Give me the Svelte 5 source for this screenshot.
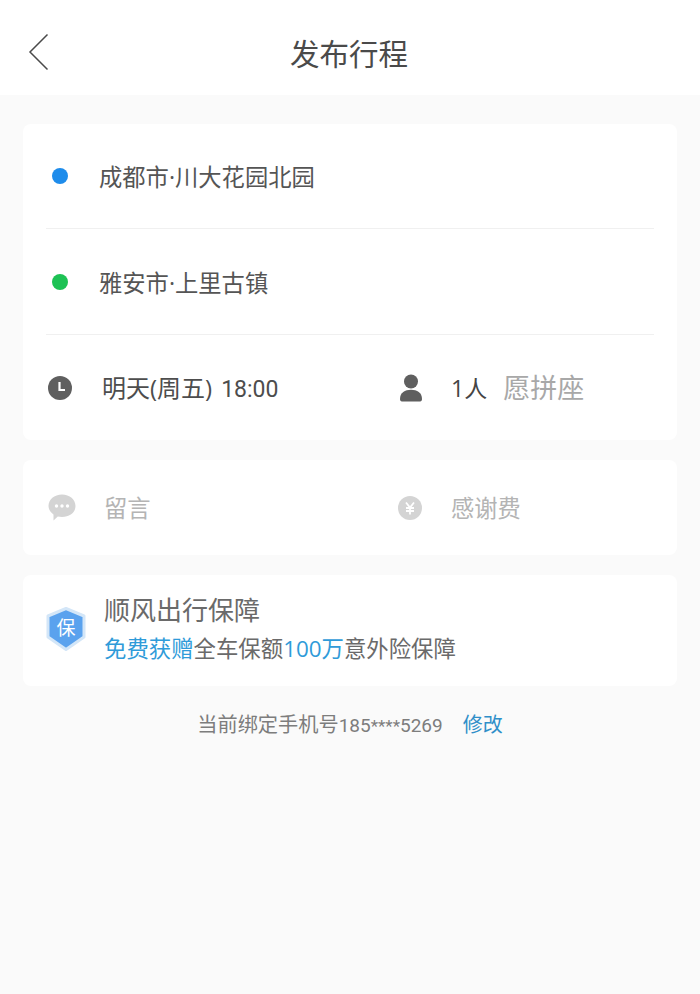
<script lang="ts">
  const hidden = '****';
</script>

<div class="page">
  <header class="topbar">
    <button class="back" aria-label="返回">
      <svg width="22" height="38" viewBox="0 0 22 38">
        <path d="M19.5 1.5 L2 19 L19.5 36.5" fill="none" stroke="#4a4a4a" stroke-width="1.5" />
      </svg>
    </button>
    <h1>发布行程</h1>
  </header>

  <main class="content">
    <section class="card route">
      <div class="place">
        <span class="dot blue"></span>
        <span class="place-name">成都市·川大花园北园</span>
      </div>
      <div class="place second">
        <span class="dot green"></span>
        <span class="place-name">雅安市·上里古镇</span>
      </div>
      <div class="split trip">
        <div class="cell time">
          <svg class="ico" width="24" height="24" viewBox="0 0 24 24">
            <circle cx="12" cy="12" r="12" fill="#5f5f5f" />
            <path d="M11.5 6 V14 H17" fill="none" stroke="#fff" stroke-width="2.2" />
          </svg>
          <span class="time-text">明天(周五)<span class="clock">18:00</span></span>
        </div>
        <div class="cell seats">
          <svg class="ico" width="24" height="28" viewBox="0 0 24 28">
            <circle cx="12" cy="7.5" r="7" fill="#5f5f5f" />
            <path d="M1 25 C1 18.5 6 15.8 12 15.8 C18 15.8 23 18.5 23 25 C23 27 22 27.5 20 27.5 H4 C2 27.5 1 27 1 25 Z" fill="#5f5f5f" />
          </svg>
          <span class="count">1人</span>
          <span class="carpool">愿拼座</span>
        </div>
      </div>
    </section>

    <section class="card split extras">
      <div class="cell note">
        <svg class="ico" width="28" height="27" viewBox="0 0 28 27">
          <path d="M14 0.5 C21.7 0.5 27.5 5.6 27.5 12 C27.5 18.4 21.7 23 14 23 C12.5 23 11 22.8 9.8 22.5 L5.5 26.5 L5.5 20.4 C2.4 18.2 0.5 15.3 0.5 12 C0.5 5.6 6.3 0.5 14 0.5 Z" fill="#d4d4d4" />
          <circle cx="8.5" cy="12" r="1.7" fill="#fff" />
          <circle cx="14" cy="12" r="1.7" fill="#fff" />
          <circle cx="19.5" cy="12" r="1.7" fill="#fff" />
        </svg>
        <span class="muted">留言</span>
      </div>
      <div class="cell fee">
        <svg class="ico" width="24" height="24" viewBox="0 0 24 24">
          <circle cx="12" cy="12" r="12" fill="#d4d4d4" />
          <path d="M8 6.5 L12 11.5 L16 6.5 M8 12 H16 M8 15 H16 M12 11.5 V18.5" fill="none" stroke="#fff" stroke-width="1.8" />
        </svg>
        <span class="muted">感谢费</span>
      </div>
    </section>

    <section class="card insurance">
      <svg class="shield" width="40" height="44" viewBox="0 0 40 44">
        <path d="M20 1.5 L38 9 V30 L20 42.5 L2 30 V9 Z" fill="#5aa2ee" stroke="#d3e6f8" stroke-width="3" stroke-linejoin="round" />
        <text x="20" y="28" text-anchor="middle">保</text>
      </svg>
      <div class="insurance-text">
        <div class="insurance-title">顺风出行保障</div>
        <div class="insurance-desc"><em>免费获赠</em>全车保额<em>100万</em>意外险保障</div>
      </div>
    </section>

    <p class="phone">当前绑定手机号<span class="num">185<span class="stars">{hidden}</span>5269</span><a href="#edit">修改</a></p>
  </main>
</div>

<style>
  :global(body) {
    margin: 0;
    background: #fafafa;
  }

  .page {
    height: 994px;
    overflow: hidden;
    background: #fafafa;
    color: #444;
    font-family: "Open Sans", "Noto Sans CJK SC", sans-serif;
  }

  .topbar {
    height: 95px;
    box-sizing: border-box;
    padding-top: 9px;
    background: #fff;
    display: flex;
    align-items: center;
    justify-content: center;
    position: relative;
  }
  .back {
    position: absolute;
    left: 28px;
    top: 33px;
    padding: 0;
    border: none;
    background: none;
    line-height: 0;
  }
  h1 {
    margin: 0 2px 0 0;
    font-size: 29.5px;
    font-weight: 400;
    color: #4a4a4a;
  }

  .content {
    padding: 29px 23px 0;
    display: flex;
    flex-direction: column;
    gap: 20px;
  }

  .card {
    background: #fff;
    border-radius: 8px;
  }

  .place {
    height: 105px;
    margin: 0 23px;
    display: flex;
    align-items: center;
    border-bottom: 1px solid #f0f0f0;
    box-sizing: border-box;
  }
  .place.second { height: 106px; }
  .dot {
    width: 16px;
    height: 16px;
    border-radius: 50%;
    margin: 0 31px 0 6px;
  }
  .dot.blue { background: #1e8ceb; }
  .dot.green { background: #1dc254; }
  .place-name {
    font-size: 23.3px;
    color: #555;
  }

  .split {
    display: flex;
    align-items: center;
  }
  .trip { height: 105px; }
  .extras { height: 95px; }

  .cell {
    display: flex;
    align-items: center;
    flex: none;
  }
  .time, .note { width: 375px; padding-left: 25px; box-sizing: border-box; }
  .ico { flex: none; }
  .seats { padding-left: 1px; }

  .time-text {
    margin: 0 0 2px 30px;
    font-size: 24px;
    color: #4d4d4d;
  }
  .clock {
    margin-left: 9px;
    font-family: Roboto, sans-serif;
    font-size: 23px;
  }
  .count {
    margin: 0 0 2px 28px;
    font-size: 23px;
    color: #444;
  }
  .carpool {
    margin: 0 0 2px 16px;
    font-size: 27px;
    color: #a8a8a8;
  }
  .muted {
    margin-bottom: 2px;
    font-size: 23.3px;
    color: #b4b4b4;
  }
  .note .muted { margin-left: 28px; }
  .fee .muted { margin-left: 29px; }

  .insurance {
    height: 111px;
    display: flex;
    align-items: center;
    padding-left: 23px;
  }
  .shield { flex: none; margin-bottom: 4px; }
  .shield text {
    fill: #fff;
    font-size: 19px;
    font-family: "Noto Sans CJK SC", sans-serif;
  }
  .insurance-text {
    margin: 0 0 3px 18px;
  }
  .insurance-title {
    font-size: 26px;
    line-height: 34px;
    color: #6a6a6a;
  }
  .insurance-desc {
    margin-top: 6px;
    font-size: 22.4px;
    line-height: 32px;
    color: #6a6a6a;
  }
  em {
    font-style: normal;
    color: #2f9bd9;
  }

  .phone {
    margin: 3px 0 0;
    text-align: center;
    font-size: 20.2px;
    color: #7d7d7d;
  }
  .num {
    font-family: Roboto, sans-serif;
    font-size: 19px;
  }
  .stars { font-size: 17px; }
  .phone a {
    margin-left: 20px;
    font-size: 20px;
    color: #2f8fc9;
    text-decoration: none;
  }
</style>
